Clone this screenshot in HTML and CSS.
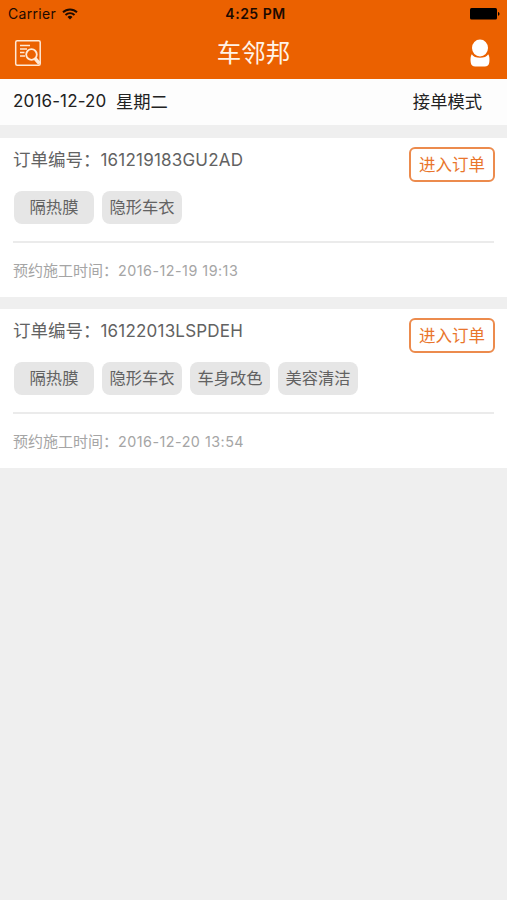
FILE: index.html
```html
<!DOCTYPE html>
<html lang="zh-CN">
<head>
<meta charset="utf-8">
<title>车邻邦</title>
<link rel="stylesheet" href="styles.css">
</head>
<body>
<header class="header">
  <div class="status">
    <div class="carrier"><span>Carrier</span>
      <svg class="wifi" width="16" height="12" viewBox="0 0 16 12" fill="none" stroke="#1c0a00" stroke-width="1.9"><path d="M1 4.3a10 10 0 0 1 14 0M3.5 7a6.4 6.4 0 0 1 9 0"/><path d="M8 11.5 5.5 9a3.6 3.6 0 0 1 5 0z" fill="#1c0a00" stroke="none"/></svg>
    </div>
    <div class="clock">4:25 PM</div>
    <svg class="battery" width="30" height="12" viewBox="0 0 30 12"><rect width="27" height="11.5" rx="1.5"/><path d="M28 4c2 .3 2 3.500 0 3.800z"/></svg>
  </div>
  <nav class="nav">
    <svg class="orders" width="28" height="28" viewBox="0 0 28 28" fill="none" stroke="#ffe9d6" stroke-width="1.500"><rect x="1.700" y="1.700" width="24.500" height="24.500" rx="1.500"/><path d="M6 6.500h10M6 10h7M6 13.500h4.500M6 17h5"/><circle cx="17.500" cy="15.500" r="5.300" stroke-width="1.800"/><path d="M21.200 19.700l4.300 5" stroke-width="3.600"/></svg>
    <h1 class="title">车邻邦</h1>
    <svg class="user" width="20" height="28" viewBox="0 0 20 28" fill="#fff"><ellipse cx="10" cy="9" rx="8" ry="8.500"/><path d="M1.800 15.300C4 20 16 20 18.200 15.300c1.300 1.700 1.500 5 1.100 8-.3 3-2 4.200-4.500 4.200H5.200c-2.500 0-4.200-1.200-4.500-4.200-.4-3-.2-6.300 1.100-8z"/></svg>
  </nav>
</header>
<main>
  <section class="datebar">
    <div class="date"><span class="day">2016-12-20</span><span>星期二</span></div>
    <span>接单模式</span>
  </section>
  <article class="card">
    <div class="top">
      <div class="order">订单编号：<span class="number">161219183GU2AD</span></div>
      <button class="enter">进入订单</button>
    </div>
    <div class="tags"><span class="tag">隔热膜</span><span class="tag">隐形车衣</span></div>
    <div class="time">预约施工时间：<span class="when">2016-12-19 19:13</span></div>
  </article>
  <article class="card">
    <div class="top">
      <div class="order">订单编号：<span class="number">16122013LSPDEH</span></div>
      <button class="enter">进入订单</button>
    </div>
    <div class="tags"><span class="tag">隔热膜</span><span class="tag">隐形车衣</span><span class="tag">车身改色</span><span class="tag">美容清洁</span></div>
    <div class="time">预约施工时间：<span class="when">2016-12-20 13:54</span></div>
  </article>
</main>
</body>
</html>
```
FILE: styles.css
```css
* { box-sizing: border-box; }
body {
  margin: 0;
  background: #efefef;
  font-family: Inter, "Noto Sans CJK SC", sans-serif;
  color: #222;
}
svg { display: block; }
.header { height: 79px; background: #eb6100; }
.status {
  height: 27px;
  display: grid;
  grid-template-columns: 1fr auto 1fr;
  align-items: center;
  padding: 0 7px 0 8px;
  font-size: 14px;
  line-height: 27px;
  color: #1c0a00;
}
.carrier { display: flex; align-items: center; gap: 6px; letter-spacing: .3px; }
.clock { padding-left: 3px; font-weight: 600; letter-spacing: .5px; }
.battery { justify-self: end; fill: #000; }
.nav {
  height: 52px;
  display: grid;
  grid-template-columns: 1fr auto 1fr;
  align-items: center;
  padding: 0 17px 2px 14px;
}
.title {
  margin: 0;
  padding: 1px 0 0 3px;
  font-size: 24.5px;
  line-height: 50px;
  font-weight: 400;
  color: #fff3e8;
}
.user { justify-self: end; }
.datebar {
  height: 46px;
  display: flex;
  justify-content: space-between;
  padding: 0 25px 0 13px;
  background: #fdfdfd;
  font-size: 17.3px;
  line-height: 45px;
}
.date { display: flex; gap: 9.5px; }
.day { font-size: 17px; letter-spacing: .15px; }
.card {
  height: 159px;
  margin-top: 12.5px;
  padding: 0 13px;
  background: #fff;
}
.top { height: 53px; display: flex; justify-content: space-between; align-items: flex-start; }
.order { font-size: 17.5px; line-height: 43px; color: #626262; }
.number { font-size: 17px; letter-spacing: .2px; }
.enter {
  width: 86px;
  height: 35px;
  margin: 9px -1px 0 0;
  padding: 1px 0 0;
  border: 2px solid #ec8b4d;
  border-radius: 6px;
  background: #fff;
  font: 16.5px/31px Inter, "Noto Sans CJK SC", sans-serif;
  color: #e9752c;
}
.tags { height: 52px; display: flex; gap: 8px; padding-left: 1px; border-bottom: 2px solid #ebebeb; }
.tag {
  width: 80px;
  height: 33px;
  border-radius: 8px;
  background: #e6e6e6;
  font-size: 16.3px;
  line-height: 33px;
  text-align: center;
  color: #626262;
}
.time { font-size: 15px; line-height: 55px; color: #a5a5a5; }
.when { font-size: 14.3px; letter-spacing: .5px; }
```
